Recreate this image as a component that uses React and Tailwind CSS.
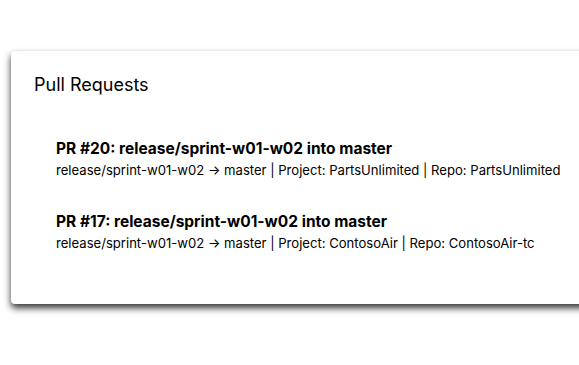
export default function App() {
  const prs = [
    { title: "PR #20: release/sprint-w01-w02 into master", sub: "release/sprint-w01-w02 → master | Project: PartsUnlimited | Repo: PartsUnlimited" },
    { title: "PR #17: release/sprint-w01-w02 into master", sub: "release/sprint-w01-w02 → master | Project: ContosoAir | Repo: ContosoAir-tc" },
  ];
  return (
    <div className="w-[579px] h-[365px] bg-white overflow-hidden" style={{ fontFamily: "Inter, 'Liberation Sans', sans-serif" }}>
      <div className="pt-[51px] pl-[11px]">
        <div className="w-[600px] h-[253px] bg-white rounded-[4px] shadow-[0_4px_7px_rgba(0,0,0,0.8)] pl-[23px] pt-[22px]">
          <h2 className="text-[18px] leading-[24px] text-black">Pull Requests</h2>
          <div className="pl-[22px] pt-[42px] flex flex-col gap-[33px]">
            {prs.map((p) => (
              <div key={p.title}>
                <div className="text-[15.5px] leading-[20px] font-bold text-black">{p.title}</div>
                <div className="text-[13.1px] leading-[18px] mt-[2px] text-black">{p.sub}</div>
              </div>
            ))}
          </div>
        </div>
      </div>
    </div>
  );
}
